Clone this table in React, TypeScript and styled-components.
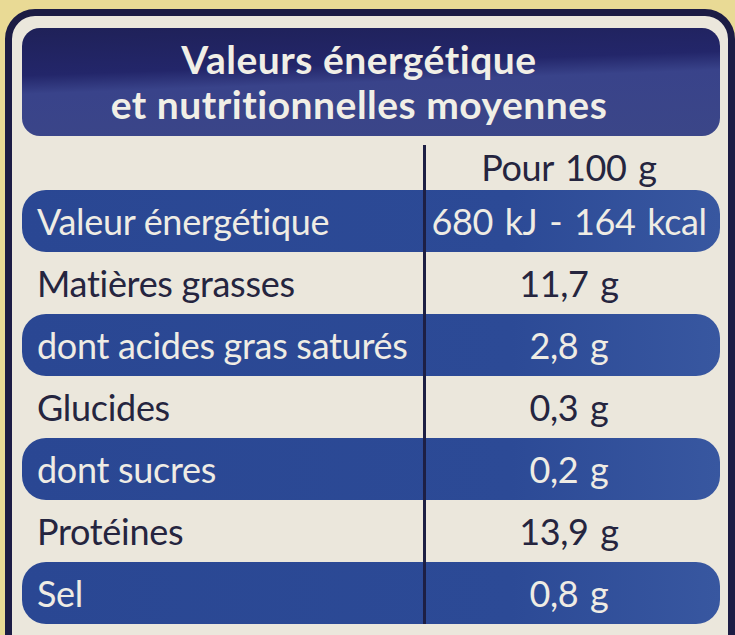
import React from 'react';
import styled, { createGlobalStyle } from 'styled-components';

const GlobalStyle = createGlobalStyle`
  html, body {
    margin: 0;
    padding: 0;
    background: #e9da95;
  }
  body {
    font-family: 'Lato', 'Open Sans', sans-serif;
    overflow: hidden;
  }
`;

const Page = styled.div`
  width: 735px;
  height: 635px;
  box-sizing: border-box;
  padding: 9px 0 0 5px;
  overflow: hidden;
`;

const Frame = styled.div`
  box-sizing: border-box;
  border: 7px solid #1c1c44;
  border-radius: 30px;
  background: #ebe7dc;
  padding: 12px 8px 20px 10px;
  height: 660px;
`;

const Header = styled.div`
  height: 108px;
  border-radius: 18px;
  background: linear-gradient(178deg, #1f2158 0%, #23266a 36%, #39438a 50%, #3b4688 100%);
  color: #f1efe6;
  display: flex;
  flex-direction: column;
  align-items: center;
  justify-content: center;
  padding-right: 24px;
`;

const HeaderLine = styled.div`
  font-size: 39px;
  font-weight: 700;
  line-height: 45px;
  letter-spacing: 0.5px;
`;

const Table = styled.div`
  display: flex;
  flex-direction: column;
`;

const Row = styled.div<{ $band?: boolean; $h?: number }>`
  display: grid;
  grid-template-columns: 401px 1fr;
  height: ${p => p.$h ?? 62}px;
  border-radius: 24px;
  background: ${p => (p.$band ? 'linear-gradient(90deg, #2a4793 0%, #2c4a96 70%, #3857a0 100%)' : 'transparent')};
  color: ${p => (p.$band ? '#efece4' : '#25253f')};
`;

const Label = styled.div`
  display: flex;
  align-items: center;
  padding-left: 15px;
  font-size: 36px;
  font-weight: 400;
  white-space: nowrap;
  letter-spacing: -0.3px;
`;

const Value = styled.div<{ $top?: boolean }>`
  display: flex;
  align-items: center;
  justify-content: center;
  border-left: 3px solid #1d1f44;
  margin-top: ${p => (p.$top ? '9px' : '0')};
  padding-bottom: ${p => (p.$top ? '8px' : '0')};
  padding-right: 8px;
  font-size: 36px;
  font-weight: 400;
  white-space: pre;
  letter-spacing: -0.4px;
  word-spacing: 3px;
`;

const rows: { label: string; value: string; band: boolean }[] = [
  { label: 'Valeur énergétique', value: '680 kJ - 164 kcal', band: true },
  { label: 'Matières grasses', value: '11,7 g', band: false },
  { label: 'dont acides gras saturés', value: '2,8 g', band: true },
  { label: 'Glucides', value: '0,3 g', band: false },
  { label: 'dont sucres', value: '0,2 g', band: true },
  { label: 'Protéines', value: '13,9 g', band: false },
  { label: 'Sel', value: '0,8 g', band: true },
];

const App: React.FC = () => {
  return (
    <Page>
      <GlobalStyle />
      <Frame>
        <Header>
          <HeaderLine>Valeurs énergétique</HeaderLine>
          <HeaderLine>et nutritionnelles moyennes</HeaderLine>
        </Header>
        <Table>
          <Row $h={54}>
            <Label />
            <Value $top>Pour 100 g</Value>
          </Row>
          {rows.map(r => (
            <Row key={r.label} $band={r.band}>
              <Label>{r.label}</Label>
              <Value>{r.value}</Value>
            </Row>
          ))}
        </Table>
      </Frame>
    </Page>
  );
};

export default App;
